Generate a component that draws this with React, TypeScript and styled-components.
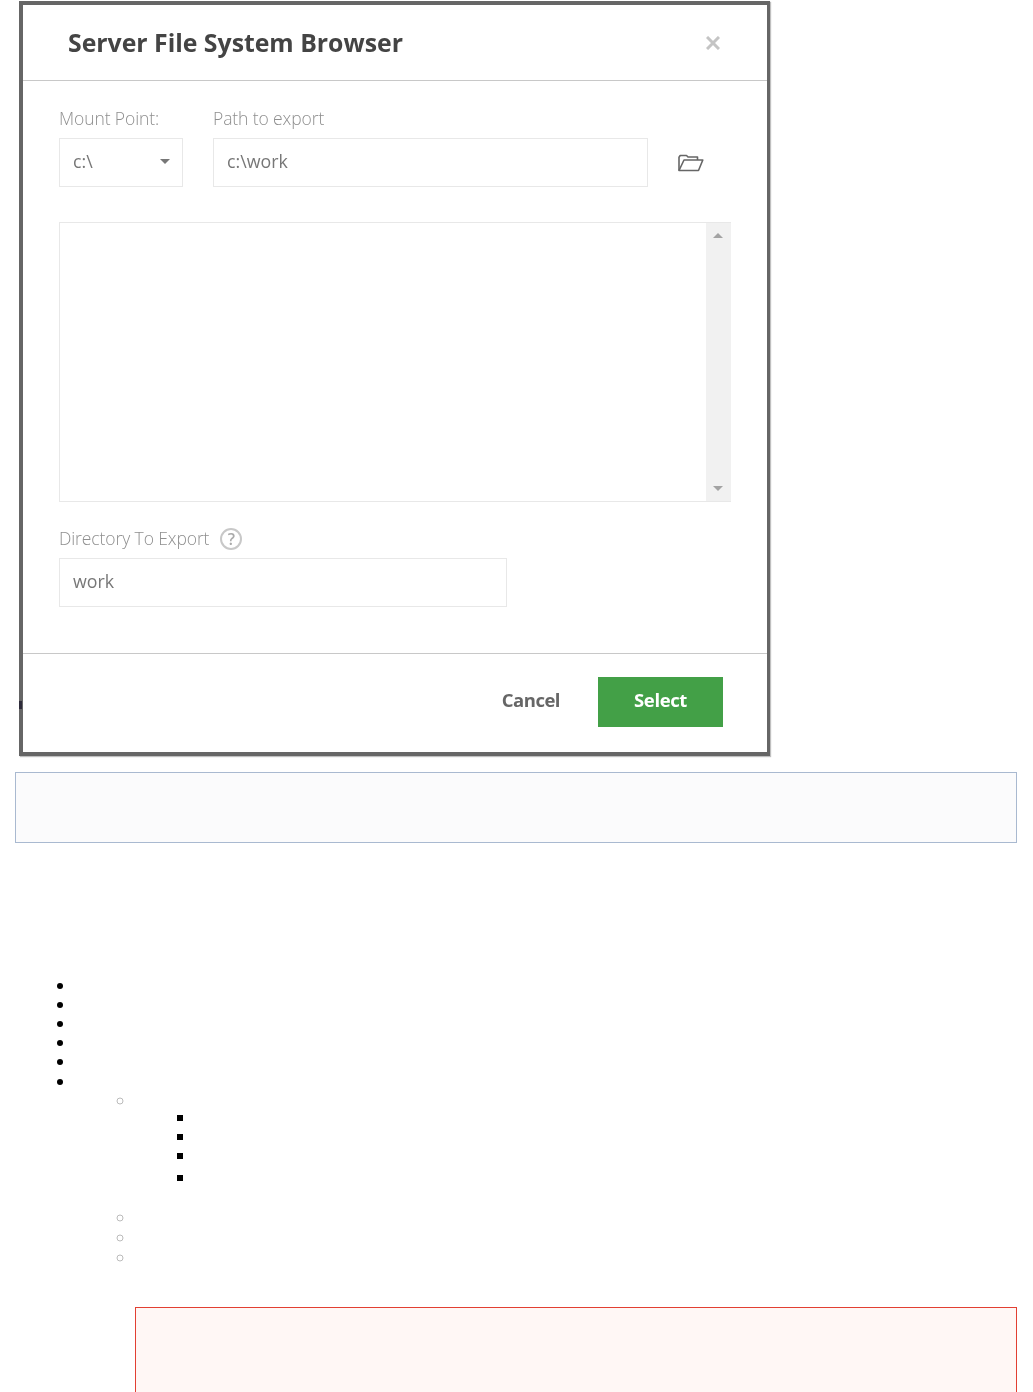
import React from "react";
import styled, { createGlobalStyle } from "styled-components";

const GlobalStyle = createGlobalStyle`
  html, body {
    margin: 0;
    padding: 0;
    background: #fff;
    height: 1392px;
    overflow: hidden;
  }
  body {
    font-family: "Open Sans", "Liberation Sans", sans-serif;
  }
`;

const Page = styled.div`
  display: flex;
  flex-direction: column;
  width: 1033px;
  padding-top: 1px;
  box-sizing: border-box;
`;

const Modal = styled.section`
  position: relative;
  display: flex;
  flex-direction: column;
  box-sizing: border-box;
  width: 751px;
  height: 755px;
  margin-left: 19px;
  background: #fff;
  border: solid #666;
  border-width: 4px 3px 4px 4px;
  box-shadow: 1px 1px 1px rgba(0, 0, 0, 0.25);
`;

const EdgeSpeck = styled.span`
  position: absolute;
  left: -4px;
  top: 696px;
  width: 3px;
  height: 8px;
  background: #2e2b3a;
`;

const Blurred = styled.div`
  display: flex;
  flex-direction: column;
  flex: 1;
  filter: blur(0.55px);
`;

const ModalHeader = styled.header`
  display: flex;
  align-items: center;
  justify-content: space-between;
  box-sizing: border-box;
  height: 76px;
  padding: 0 47px 0 45px;
  border-bottom: 1px solid #c8c8c8;
`;

const Title = styled.h2`
  margin: 0 0 2px;
  font-size: 24.8px;
  font-weight: 700;
  color: #444;
`;

const CloseIcon = styled.svg`
  width: 14px;
  height: 14px;
  stroke: #c4c4c4;
  stroke-width: 3;
`;

const ModalBody = styled.div`
  display: flex;
  flex-direction: column;
  flex: 1;
  padding: 26px 36px 0 36px;
`;

const FieldRow = styled.div`
  display: flex;
  align-items: flex-end;
  gap: 30px;
`;

const Field = styled.div<{ $width: number }>`
  display: flex;
  flex-direction: column;
  width: ${({ $width }) => $width}px;
`;

const Label = styled.label`
  display: flex;
  align-items: center;
  gap: 11px;
  box-sizing: border-box;
  height: 24px;
  margin-bottom: 7px;
  padding-bottom: 2px;
  font-size: 17.5px;
  font-weight: 300;
  letter-spacing: -0.1px;
  color: #8f8f8f;
  white-space: nowrap;
`;

const InputBox = styled.div`
  display: flex;
  align-items: center;
  justify-content: space-between;
  box-sizing: border-box;
  height: 49px;
  padding: 0 13px 4px;
  border: 1px solid #e8e8e8;
  font-size: 17.8px;
  color: #777;
`;

const Caret = styled.span`
  width: 0;
  height: 0;
  margin: 2px -1px 0 0;
  border-left: 5px solid transparent;
  border-right: 5px solid transparent;
  border-top: 5px solid #777;
`;

const FolderButton = styled.span`
  display: flex;
  align-items: center;
  height: 49px;
  margin-left: -1px;
`;

const FolderIcon = styled.svg`
  width: 27px;
  height: 19px;
  fill: none;
  stroke: #666;
  stroke-width: 1.6;
  stroke-linejoin: round;
`;

const FileList = styled.div`
  display: flex;
  justify-content: flex-end;
  box-sizing: border-box;
  width: 672px;
  height: 280px;
  margin-top: 35px;
  border: 1px solid #e8e8e8;
  border-right: 0;
`;

const ScrollTrack = styled.div`
  display: flex;
  flex-direction: column;
  align-items: center;
  justify-content: space-between;
  width: 25px;
  padding: 10px 1px 10px 0;
  box-sizing: border-box;
  background: #f1f1f1;
`;

const ScrollArrow = styled.span<{ $up?: boolean }>`
  width: 0;
  height: 0;
  border-left: 5px solid transparent;
  border-right: 5px solid transparent;
  ${({ $up }) =>
    $up ? "border-bottom: 5px solid #a3a3a3;" : "border-top: 5px solid #a3a3a3;"}
`;

const DirectoryField = styled(Field)`
  margin-top: 25px;
`;

const HelpIcon = styled.span`
  display: inline-flex;
  align-items: center;
  justify-content: center;
  box-sizing: border-box;
  width: 22px;
  height: 22px;
  margin-top: 2px;
  border: 2px solid #c8c8c8;
  border-radius: 50%;
  font-size: 16px;
  font-weight: 600;
  color: #aaa;
`;

const ModalFooter = styled.footer`
  display: flex;
  align-items: center;
  justify-content: flex-end;
  gap: 38px;
  box-sizing: border-box;
  height: 99px;
  padding: 0 44px 2px 0;
  border-top: 1px solid #c8c8c8;
`;

const CancelButton = styled.button`
  padding: 0 0 6px;
  border: 0;
  background: none;
  font-family: inherit;
  font-size: 18.5px;
  font-weight: 700;
  letter-spacing: -0.5px;
  color: #666;
`;

const SelectButton = styled.button`
  width: 125px;
  height: 50px;
  padding: 0 0 6px;
  border: 0;
  background: #43a047;
  font-family: inherit;
  font-size: 18.5px;
  font-weight: 700;
  letter-spacing: -0.4px;
  color: #fff;
`;

const Note = styled.div`
  box-sizing: border-box;
  width: 1002px;
  height: 71px;
  margin: 16px 0 0 15px;
  background: #fbfbfc;
  border: 1px solid #a9b9d0;
`;

const List = styled.ul<{
  $type: "disc" | "circle" | "square";
  $top?: number;
  $indent: number;
}>`
  margin: ${({ $top }) => $top ?? 0}px 0 0;
  padding: 0 0 0 ${({ $indent }) => $indent}px;
  list-style: ${({ $type }) => $type};
  font-family: "Liberation Sans", sans-serif;
  font-size: 21px;
  line-height: 19.2px;

  li::marker {
    color: ${({ $type }) => ($type === "circle" ? "#bbb" : "#000")};
  }
`;

const Item = styled.li<{ $after?: number }>`
  margin-bottom: ${({ $after }) => $after ?? 0}px;
`;

const Alert = styled.div`
  flex-shrink: 0;
  box-sizing: border-box;
  width: 882px;
  height: 120px;
  margin: 41px 0 0 135px;
  background: #fff7f5;
  border: 1px solid #e23f32;
`;

const App: React.FunctionComponent = () => {
  return (
    <Page>
      <GlobalStyle />
      <Modal>
        <EdgeSpeck />
        <Blurred>
          <ModalHeader>
            <Title>Server File System Browser</Title>
            <CloseIcon viewBox="0 0 14 14">
              <path d="M1 1 13 13M13 1 1 13" />
            </CloseIcon>
          </ModalHeader>
          <ModalBody>
            <FieldRow>
              <Field $width={124}>
                <Label>Mount Point:</Label>
                <InputBox>
                  c:\
                  <Caret />
                </InputBox>
              </Field>
              <Field $width={435}>
                <Label>Path to export</Label>
                <InputBox>c:\work</InputBox>
              </Field>
              <FolderButton>
                <FolderIcon viewBox="0 0 27 19">
                  <path d="M2 17.5V4.2L3.2 2.5H9.5L11 4H20.5V7" />
                  <path d="M7 7H25.8L21.5 17.5H2Z" />
                </FolderIcon>
              </FolderButton>
            </FieldRow>
            <FileList>
              <ScrollTrack>
                <ScrollArrow $up />
                <ScrollArrow />
              </ScrollTrack>
            </FileList>
            <DirectoryField $width={448}>
              <Label>
                Directory To Export
                <HelpIcon>?</HelpIcon>
              </Label>
              <InputBox>work</InputBox>
            </DirectoryField>
          </ModalBody>
          <ModalFooter>
            <CancelButton>Cancel</CancelButton>
            <SelectButton>Select</SelectButton>
          </ModalFooter>
        </Blurred>
      </Modal>
      <Note />
      <List $type="disc" $top={131.6} $indent={76}>
        <Item>&nbsp;</Item>
        <Item>&nbsp;</Item>
        <Item>&nbsp;</Item>
        <Item>&nbsp;</Item>
        <Item>&nbsp;</Item>
        <Item>
          &nbsp;
          <List $type="circle" $indent={60}>
            <Item>
              &nbsp;
              <List $type="square" $top={-2} $indent={60}>
                <Item>&nbsp;</Item>
                <Item>&nbsp;</Item>
                <Item $after={2}>&nbsp;</Item>
                <Item $after={21}>&nbsp;</Item>
              </List>
            </Item>
            <Item $after={1}>&nbsp;</Item>
            <Item $after={1}>&nbsp;</Item>
            <Item>&nbsp;</Item>
          </List>
        </Item>
      </List>
      <Alert />
    </Page>
  );
};

export default App;
